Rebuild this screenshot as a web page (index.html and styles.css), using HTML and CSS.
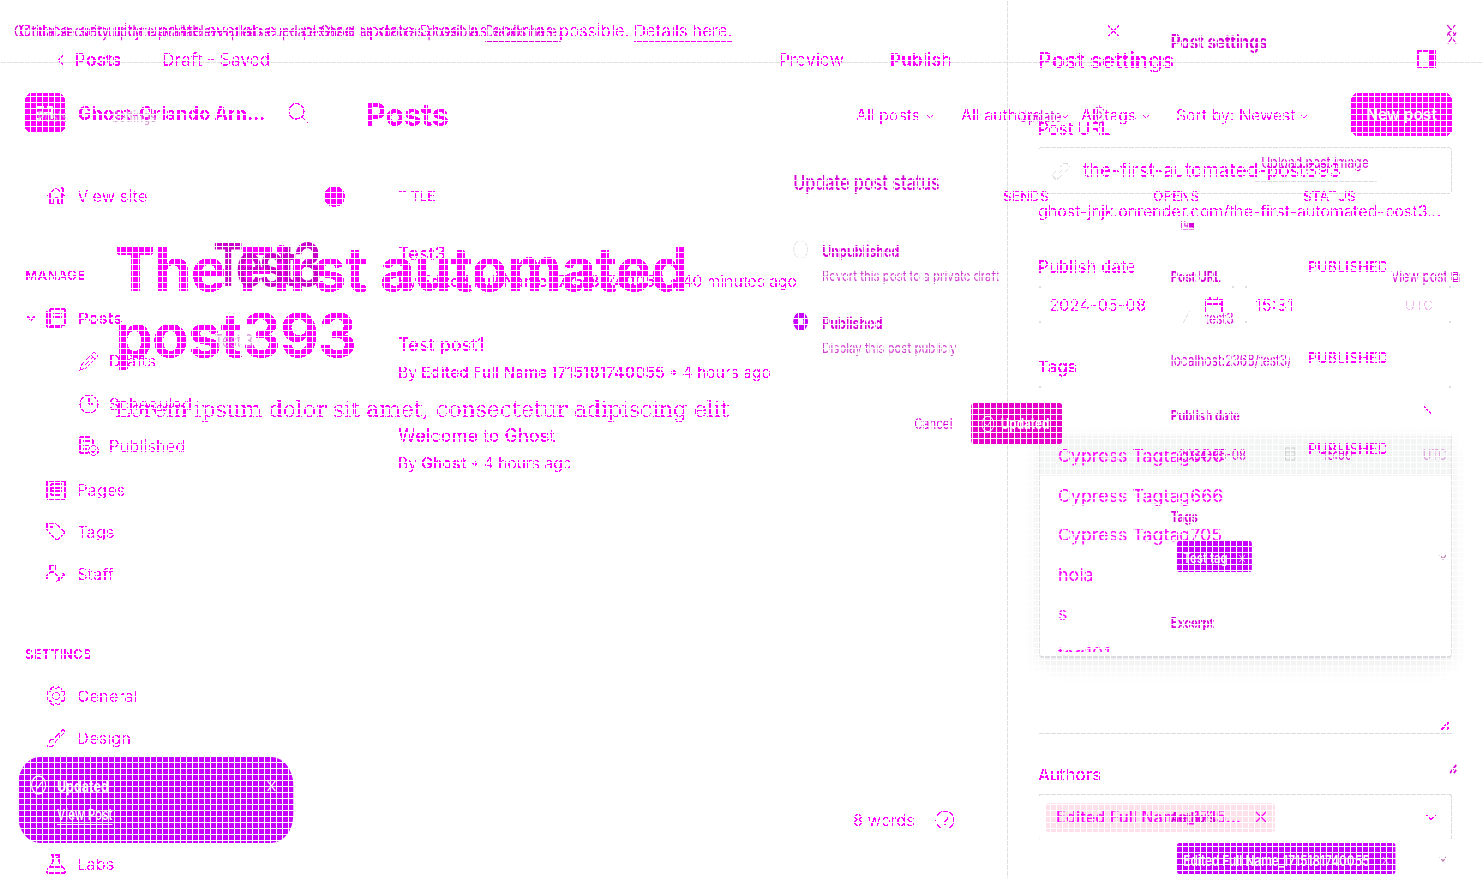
FILE: index.html
```
<!DOCTYPE html>
<html lang="en"><head><meta charset="utf-8"><title>Posts</title><link rel="stylesheet" href="styles.css"></head>
<body>
<svg class="defs"><defs>
<filter id="crisp" x="0" y="0" width="100%" height="100%" color-interpolation-filters="sRGB"><feComponentTransfer><feFuncA type="discrete" tableValues="0 0 0 0 1 1 1 1"/></feComponentTransfer></filter>
<symbol id="chev" viewBox="0 0 10 6"><path d="M1 1l4 4 4-4"/></symbol>
<symbol id="x" viewBox="0 0 12 12"><path d="M1 1l10 10M11 1L1 11"/></symbol>
<symbol id="check" viewBox="0 0 20 20"><circle cx="10" cy="10" r="9"/><path d="M6 10l3 3 5-6"/></symbol>
<symbol id="resize" viewBox="0 0 10 10"><path d="M1 9l8-8M6 9l3-3" stroke-width="2"/></symbol>
</defs></svg>

<div class="layer editor">
 <main class="write">
  <header class="bar"><svg class="back" viewBox="0 0 6 10"><path d="M5 1L1 5l4 4"/></svg><b class="w87">Posts</b><span class="w617">Draft - Saved</span><span class="w111">Preview</span><b>Publish</b></header>
  <h1>The First automated<br>post393</h1>
  <p class="lorem">Lorem ipsum dolor sit amet, consectetur adipiscing elit</p>
  <footer><span>8 words</span><svg viewBox="0 0 20 20"><circle cx="10" cy="10" r="9"/><path d="M7.500 8a2.500 2.500 0 1 1 2.500 3v1M10 14v1"/></svg></footer>
 </main>
 <aside class="settings">
  <header><b>Post settings</b><svg viewBox="0 0 19 18"><path d="M1 1h17v16H1z"/><path class="solid" d="M12 1h6v16h-6z"/></svg></header>
  <label class="url-label">Post URL</label>
  <div class="field url"><svg viewBox="0 0 18 18"><path d="M7 11l4-4M8 5l3-3a3 3 0 0 1 5 5l-3 3M10 13l-3 3a3 3 0 0 1-5-5l3-3"/></svg><span>the-first-automated-post393</span></div>
  <div class="hint">ghost-jnjk.onrender.com/the-first-automated-post3…</div>
  <label class="date-label">Publish date</label>
  <div class="dates"><div class="corners date"><span>2024-05-08</span><svg viewBox="0 0 18 16"><path d="M1 15V3h16v12M1 7h16M5 0v4M13 0v4"/></svg></div><div class="corners time"><span>15:31</span><i>UTC</i></div></div>
  <label class="tags-label"><b>Tags</b></label>
  <div class="corners tagbox"><svg viewBox="0 0 12 12"><path d="M1 1l7 8"/></svg></div>
  <div class="dropslot"></div>
  <div class="excerpt"><svg><use href="#resize"/></svg></div>
  <label class="authors-label">Authors</label>
  <div class="field authors"><span class="token"><b>Edited Full Name_1715…</b><svg><use href="#x"/></svg></span><svg class="chev"><use href="#chev"/></svg></div>
 </aside>
</div>

<div class="drop"><ul><li>Cypress Tagtag606</li><li>Cypress Tagtag666</li><li>Cypress Tagtag705</li><li>hola</li><li>s</li><li>tag101</li></ul></div>

<div class="layer list">
 <nav>
  <div class="brand"><span class="logo"><svg viewBox="0 0 20 18"><path d="M1 3h8M1 9h16M1 15h5M12 3h5v12"/></svg></span><b>Ghost-Orlando Arn...</b><svg class="search" viewBox="0 0 20 20"><circle cx="8" cy="8" r="7.300"/><path d="M13 13l6 6"/></svg></div>
  <div class="item view"><svg viewBox="0 0 20 18"><path d="M1 9l9-8 9 8M4 7v10h4v-6h4v6h4V7M14 1h3v4"/></svg>View site<span class="avatar"></span></div>
  <h5>MANAGE</h5>
  <div class="item posts"><svg class="chev"><use href="#chev"/></svg><svg viewBox="0 0 20 20"><path d="M4 1h15v16H4zM1 3v16h15M7 5h9M7 9h9"/></svg><b>Posts</b></div>
  <div class="item sub"><svg viewBox="0 0 20 20"><path d="M1 19l2-6L15 1l4 4L7 17zM12 4l4 4M4 16L14 6"/></svg>Drafts</div>
  <div class="item sub"><svg viewBox="0 0 20 20"><circle cx="10" cy="10" r="9"/><path d="M10 4v6h4"/></svg>Scheduled</div>
  <div class="item sub"><svg viewBox="0 0 20 20"><path d="M9 17H1V1h10l3 3v4M4 5h7M4 9h6M4 13h4"/><circle cx="14.500" cy="14.500" r="4.800"/><path d="M12 14l2 3 3-4"/></svg>Published</div>
  <div class="item pages"><svg viewBox="0 0 20 20"><path d="M1 1h18v18H1zM5 4h11M5 8h11M5 11h11M5 15h9M5 4v11"/></svg>Pages</div>
  <div class="item"><svg viewBox="0 0 20 20"><path d="M1 1h8l10 9-8 9L1 8zM4 5h3"/></svg>Tags</div>
  <div class="item"><svg viewBox="0 0 20 20"><path d="M4 1h5v6H4zM1 15V11l4-3h3l5 6M10 18l7-7M13 17l6-6-3-2"/></svg>Staff</div>
  <h5 class="set">SETTINGS</h5>
  <div class="item"><svg viewBox="0 0 20 20"><circle cx="10" cy="10" r="3.500"/><path d="M10 3l2-2 3 1v3l3 0 1 3-2 2 2 2-1 3h-3l-1 3-2 1-2-2-2 2-3-1v-3H3l-2-3 2-2-2-2 1-3h3V2l3-1z"/></svg>General</div>
  <div class="item"><svg viewBox="0 0 20 20"><path d="M7 12L17 1l2 3L9 14M7 11c-5 0-3 5-6 8 5 0 8-1 8-5M12 6l3 3"/></svg>Design</div>
  <div class="item">Code injection</div><div class="item">Integrations</div>
  <div class="item"><svg viewBox="0 0 20 20"><path d="M5 1h9M7 1v7L1 16v3h18v-3L13 8V1M4 13h12M10 4h3"/></svg>Labs</div>
 </nav>
 <section>
  <header><h2>Posts</h2><span class="f f1"><span>All posts</span><svg><use href="#chev"/></svg></span><span class="f f2"><span>All authors</span><svg><use href="#chev"/></svg></span><span class="f f3"><span>All tags</span><svg><use href="#chev"/></svg></span><span class="f f4"><span>Sort by: Newest</span><svg><use href="#chev"/></svg></span><span class="new">New post</span></header>
  <div class="thead"><span>TITLE</span><span>SENDS</span><span>OPENS</span><span>STATUS</span></div>
  <article><div><h3>Test3</h3><p>By <b>Edited Full Name 1715181740055</b> • 40 minutes ago</p></div><em>PUBLISHED</em></article>
  <article><div><h3>Test post1</h3><p>By <b>Edited Full Name 1715181740055</b> • 4 hours ago</p></div><em>PUBLISHED</em></article>
  <article><div><h3>Welcome to Ghost</h3><p>By <b>Ghost</b> • 4 hours ago</p></div><em>PUBLISHED</em></article>
 </section>
</div>

<div class="layer banner wide"><span>Critical security update available — please update Ghost as soon as possible. <u>Details here.</u></span><svg><use href="#x"/></svg></div>

<div class="layer narrow">
 <div class="nbanner"><span>Critical security update available — please update Ghost as soon as possible. <u>Details here.</u></span><svg><use href="#x"/></svg></div>
 <div class="ncols">
 <div class="nleft"><div class="crumb"><span>Posts</span><span>Settings</span></div><h4>Test3</h4><small>Test 3</small>
  <div class="toast"><svg class="ok"><use href="#check"/></svg><div><b>Updated</b><u>View Post</u></div><svg class="close"><use href="#x"/></svg></div></div>
 <div class="dialog"><div class="upd"><span>Update</span><svg viewBox="0 0 20 20"><circle cx="10" cy="10" r="8"/><circle cx="10" cy="10" r="3"/><path d="M10 0v3M10 17v3M0 10h3M17 10h3"/></svg></div>
  <div class="dt">Update post status</div>
  <div class="opt"><i class="radio"></i><div><b>Unpublished</b><p>Revert this post to a private draft</p></div></div>
  <div class="opt"><i class="radio on"></i><div><b>Published</b><p>Display this post publicly</p></div></div>
  <div class="act"><span>Cancel</span><span class="btn"><svg><use href="#check"/></svg><b>Updated</b></span></div></div>
 <div class="nset">
  <div class="nh"><b>Post settings</b><svg><use href="#x"/></svg></div>
  <div class="upload">Upload post image</div>
  <svg class="thumb" viewBox="0 0 17 9"><path d="M1 0v8h15V2M5 0v5h5"/><path class="solid" d="M9 2h7v4H9z"/></svg>
  <div class="nr nurl"><b>Post URL</b><span>View post ⧉</span></div>
  <div class="slug"><svg viewBox="0 0 10 14"><path d="M1 13l8-12"/></svg>test3</div>
  <div class="local">localhost:2368/test3/</div>
  <div class="ndate"><b>Publish date</b></div>
  <div class="nvals"><span>2024-05-08</span><svg viewBox="0 0 14 14"><path d="M1 1h12v12H1zM1 5h12M1 9h12M7 1v12"/></svg><span>15:00</span><i>UTC</i></div>
  <div class="ntags"><b>Tags</b></div>
  <div class="nt"><span>Test tag <svg><use href="#x"/></svg></span><svg class="chev"><use href="#chev"/></svg></div>
  <div class="nex"><b>Excerpt</b></div>
  <svg class="handle"><use href="#resize"/></svg>
  <div class="nau"><b>Authors</b></div>
  <div class="nt last"><span>Edited Full Name_1715181740055 <svg><use href="#x"/></svg></span><svg class="chev"><use href="#chev"/></svg></div>
 </div></div>
</div>
<div class="mesh"></div>
</body></html>
```
FILE: styles.css
```
*{box-sizing:border-box;margin:0;padding:0}
body{width:1483px;height:878px;overflow:hidden;position:relative;background:#fff;color:#f0f;font:400 17px/20px Inter,sans-serif;white-space:nowrap}
svg{fill:none;stroke:currentColor;stroke-width:1.2;flex:none}
.solid{fill:currentColor}
.defs{position:absolute;width:0;height:0}
b{font-weight:600}
i,em{font-style:normal}
.layer{position:absolute;top:0;left:0;width:1483px;height:878px;overflow:hidden}
.editor,.list,.banner{filter:url(#crisp)}
.mesh{position:absolute;inset:0;background:repeating-linear-gradient(90deg,#fff 0 1px,transparent 1px 6px),repeating-linear-gradient(#fff 0 1px,transparent 1px 6px)}

/* editor */
.editor{display:grid;grid-template-columns:1007px 476px}
.bar{height:63px;border-bottom:1px solid #e0e0e0;display:flex;padding:49px 0 0 57px;line-height:21px;font-size:17.300px}
.back{width:7px;height:12px;margin:5px 11px 0 0}
.w87{width:87px}.w617{width:617px}.w111{width:111px}
h1{font-size:60px;line-height:66px;font-weight:700;margin:173px 0 0 115px;letter-spacing:-.8px}
.lorem{font:23px/30px "DejaVu Serif",serif;letter-spacing:-.6px;margin:26px 0 0 115px}
footer{display:flex;margin:386px 0 0 853px;font-size:16.300px}
footer svg{width:20px;height:20px;margin-left:22px}
footer span{width:60px}
.settings{border-left:1px solid #e0e0e0;padding-right:31px}
.settings>*:not(header){margin-left:30px}
.settings>header{height:63px;width:476px;border-bottom:1px solid #e0e0e0;padding:50px 48px 0 30px;display:flex;justify-content:space-between;font-size:21.700px;line-height:21px}
.settings>header svg{width:19px;height:18px;stroke-width:1.7}
label{display:block;height:20px;font-weight:500;font-size:16.700px}
.url-label{margin-top:56px}
.field{border:1px solid #ddd;border-radius:3px;display:flex;align-items:center}
.url{height:47px;margin-top:8px;font-size:18.900px}
.url svg{width:18px;height:18px;color:#ddd;margin:0 13px 0 13px}
.hint{margin-top:8px;font-size:16px;line-height:19px;padding-bottom:1px}
.date-label{margin-top:35px}
.dates{display:flex;gap:9px;margin-top:8px;height:39px;font-size:16.500px}
.corners{border:1px solid #fff;display:flex;align-items:center;background:linear-gradient(#ddd,#ddd) 0 0/2px 2px no-repeat,linear-gradient(#ddd,#ddd) 100% 0/2px 2px no-repeat,linear-gradient(#ddd,#ddd) 0 100%/2px 2px no-repeat,linear-gradient(#ddd,#ddd) 100% 100%/2px 2px no-repeat}
.date{width:197px;padding-left:10px}.date span{width:156px}.date svg{width:18px;height:16px;stroke-width:1.4}
.time{width:208px;padding:0 18px 0 10px;justify-content:space-between}.time i{font-size:13.500px;font-weight:300;color:#f3b4f3}
.tags-label{margin-top:33px}
.tagbox{height:51px;margin-top:8px;background-size:2px 2px,2px 2px,0 0,0 0}
.tagbox svg{width:12px;height:12px;margin-left:384px}
.dropslot{height:223px}
.excerpt{height:75px;border-bottom:1px solid #ddd;display:flex;align-items:flex-end;justify-content:flex-end}
.excerpt svg{width:10px;height:10px;margin:0 2px 2px}
.authors-label{margin-top:31px}
.authors{height:46px;margin-top:9px;padding-left:7px;border-bottom-color:#fff}
.token{width:229px;height:29px;background:#fde0ea;border-radius:3px;padding:0 8px 0 10px;display:flex;align-items:center;justify-content:space-between;font-size:16.600px}
.token b{font-weight:500;letter-spacing:-.1px}
.token svg{width:12px;height:12px}
.authors .chev{width:12px;height:7px;margin-left:150px}
.drop{position:absolute;left:1039px;top:436px;width:413px;height:222px;background:#fff;border:1px solid #e0e0e5;border-top:0;border-bottom:2px solid #dcdce0;border-radius:0 0 4px 4px;box-shadow:0 4px 20px rgba(0,0,0,.05),0 12px 22px rgba(0,0,0,.03)}
.drop ul{height:216px;overflow:hidden;list-style:none;font-size:17.800px}
.drop li{height:39.500px;line-height:39.500px;padding-left:18px}
.drop li:first-child{background:#f3f5f5}

/* post list */
.list{display:grid;grid-template-columns:366px 1fr}
nav{padding-top:93px}
.brand{height:40px;display:flex;align-items:center;padding-left:25px;font-size:18.200px}
.brand b{font-weight:700}
.logo{width:40px;height:40px;border-radius:7px;background:#f0f;margin-right:13px;display:grid;place-items:center;color:#fff}
.logo svg{width:20px;height:18px;stroke-width:2}
.search{width:21px;height:21px;margin:0 57px 0 auto}
.item{height:42.200px;display:flex;align-items:center;padding-left:77px;font-size:16.500px}
.item>svg{width:20px;height:20px;margin:0 11px 0 -31px;stroke-width:1.200}
.view{margin-top:42px}
.avatar{width:21px;height:21px;border-radius:50%;background:#f0f;margin:0 21px 0 auto}
h5{font-size:13.300px;line-height:20px;font-weight:600;letter-spacing:.2px;padding-left:25px;margin:48px 0 12px}
h5.set{margin-bottom:11px;font-size:13px}
.posts{padding-left:26px}
.item>.chev{width:10px;height:6px;margin:0;stroke-width:1.5}
.posts svg+svg{margin:0 12px 0 10px}
.sub{padding-left:109px;position:relative;top:1px}
.sub>svg{margin-right:10px;margin-left:-30px}
.pages{margin-top:3px}
section header{margin-top:93px;height:43px;display:grid;grid-template-columns:490px 105px 120px 95px 175px 101px;align-items:center}
h2{font-size:31px;font-weight:700;line-height:36px;letter-spacing:-.4px}
.f{display:flex;align-items:center;font-size:15.900px;padding-top:3px}
.f svg{width:8px;height:5px;stroke-width:1.5}
.f1>span{width:70px}.f2>span{width:100px}.f3>span{width:61px}.f4>span{width:124px}
.new{height:43px;border-radius:7px;background:#f0f;color:#fff;text-align:center;line-height:44px;font-weight:600;font-size:15.500px}
.thead{display:grid;grid-template-columns:605px 150px 150px 100px;margin:50px 0 15px 32px;font-size:13.600px;font-weight:500}
article{height:91px;display:flex;align-items:center;margin-left:32px}
article div{width:910px}
h3{font-size:18px;line-height:28px;font-weight:500;padding-top:1px}
article p{font-size:15.600px;line-height:27px}
article em{font-size:14.300px;font-weight:500;padding-top:1px}

/* banner */
.banner{padding:21px 0 0 19px;display:flex;font-size:16.700px}
.banner span{width:1088px}
.banner svg{width:13px;height:16px;margin-top:2px}
u{text-underline-offset:4px}

/* condensed editor */
.narrow{width:1901px;transform:scaleX(.78);transform-origin:0 0;color:#d800d8}
.narrow b{font-weight:700}
.nbanner{height:41px;padding:21px 0 0 18px;display:flex;font-size:16.400px}
.nbanner span{width:1836px}
.nbanner svg{width:13px;height:14px;margin-top:2px}
.ncols{display:grid;grid-template-columns:1017px 484px 370px;margin-top:-9px}
.crumb{display:flex;gap:56px;padding-left:48px;margin-top:75px;font-size:15px;color:#d8a0d8}
h4{font-size:59px;line-height:70px;font-weight:600;letter-spacing:-5px;margin:103px 0 0 273px;color:#c800c8}
small{display:block;margin:31px 0 0 275px;font-size:17px;color:#d8a0d8}
.toast{width:353px;height:86px;margin:406px 0 0 23px;border-radius:28px;background:#c800ff;color:#fff;display:flex;padding:18px 22px 0 16px;font-size:16px}
.toast div{margin-left:13px}.toast b,.toast u{display:block;line-height:22px}.toast u{margin-top:7px;font-size:15px;font-weight:500}
.toast svg{width:21px;height:20px;stroke-width:1.5}.toast .close{width:12px;height:12px;margin:5px 0 0 auto}
.upd{display:flex;padding:73px 0 0 289px}.upd span{width:93px;font-size:16px;margin-top:1px}.upd svg{width:20px;height:20px}
.dt{font-size:20.800px;line-height:24px;margin-top:45px;font-weight:500}
.opt{display:flex;margin-top:46px}
.radio{width:19px;height:19px;border-radius:50%;border:1px solid #ddd;margin:-1px 18px 0 0}
.radio.on{border:6px solid #c800ff}
.opt b{display:block;font-size:16px}.opt p{font-size:14.700px;margin-top:5px;color:#d040d0}
.opt+.opt{margin-top:27px}
.act{display:flex;margin:45px 0 0 155px;align-items:center;font-size:15px}
.act>span:first-child{width:73px}
.btn{width:117px;height:41px;background:#e600c8;color:#fff;border-radius:4px;display:flex;align-items:center;padding-left:13px}
.btn svg{width:17px;height:18px;margin-right:8px}
.nset{font-size:14.700px}
.nh{display:flex;justify-content:space-between;padding-right:3px;font-size:19.500px}.nh svg{width:13px;height:14px;margin-top:-1px}
.upload{margin:101px 0 0 108px;width:156px;height:29px;border-bottom:1px solid #ddd;padding-left:8px;font-size:15.500px}
.thumb{display:block;width:17px;height:9px;margin:39px 0 0 13px}
.nr{display:flex;justify-content:space-between}.nurl{margin-top:37px}.nurl span{font-size:15.500px}
.slug{margin:22px 0 0 15px;font-size:15.500px}.slug svg{width:10px;height:14px;color:#ddd;margin-right:19px}
.local{margin-top:22px;font-size:15.300px}.ndate{margin-top:35px}
.nvals{display:flex;margin:19px 0 0 10px}.nvals span:first-child{width:136px}.nvals svg{width:14px;height:14px;margin:2px 35px 0 0;color:#ccc}.nvals span+svg+span{width:128px}.nvals i{color:#dca0dc}
.ntags{margin-top:42px}
.nt{display:flex;justify-content:space-between;align-items:center;margin:14px 16px 0 8px;font-weight:600}
.nt span{height:31px;line-height:31px;background:#c800ff;color:#fff;padding:4px 8px 0;border-radius:3px;display:flex;align-items:center;justify-content:space-between;width:96px}.nt span svg{width:9px;height:9px}
.nt .chev{width:10px;height:6px;color:#c080b0;stroke-width:1.6}
.nex{margin-top:41px}
.handle{display:block;width:10px;height:10px;margin:131px 0 0 357px}
.nau{margin-top:34px}.nt.last{margin-top:15px}
.nt.last span{font-size:15.200px;width:280px}
```
